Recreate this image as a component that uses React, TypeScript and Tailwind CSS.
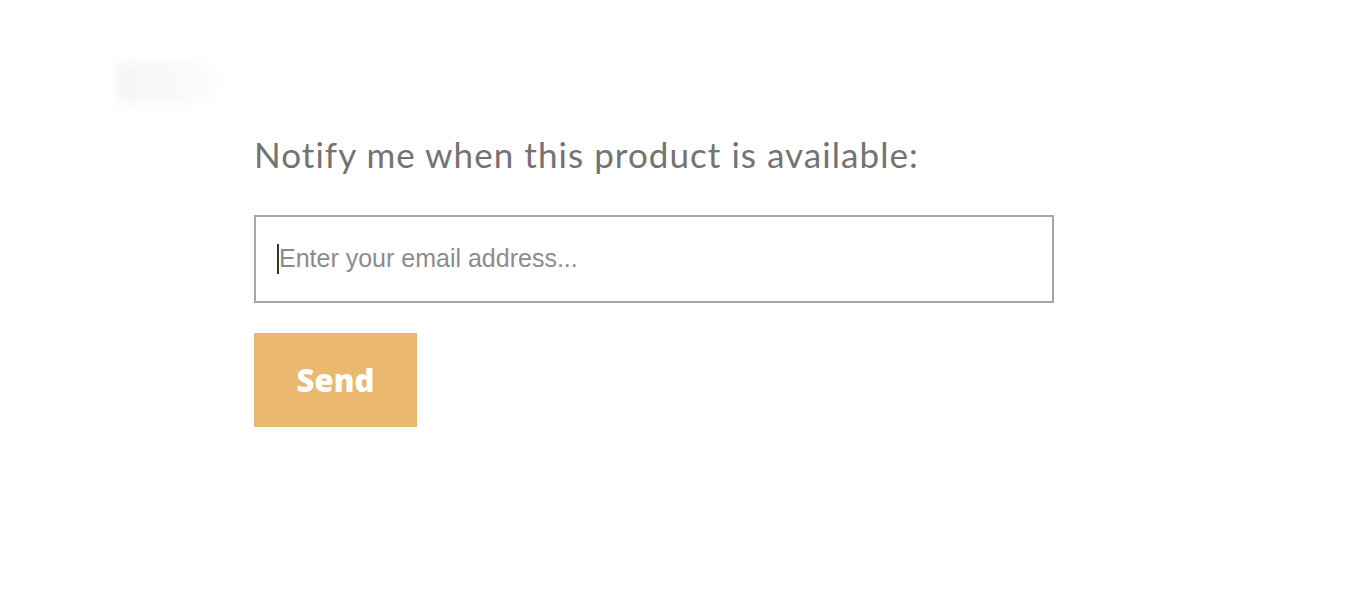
import React from "react";

export default function App() {
  return (
    <div className="w-[1348px] h-[594px] bg-white overflow-hidden relative">
      <div className="pt-[62px] pl-[117px]">
        <div className="w-[100px] h-[40px] bg-gradient-to-r from-[#f5f5f5] to-[#fcfcfc] blur-[5px] rounded-r-full" />
      </div>
      <div className="pl-[254px] pt-[28px]">
        <h1
          className="text-[35px] leading-[48px] text-[#737373] tracking-[1.05px]"
          style={{ fontFamily: "Lato, 'Noto Sans', sans-serif" }}
        >
          Notify me when this product is available:
        </h1>
        <div className="mt-[37px] w-[800px] h-[88px] border-2 border-[#a6a6a6] flex items-center pl-[21px]">
          <span className="w-[2px] h-[30px] bg-[#333]" />
          <span
            className="text-[25px] text-[#8c8c8c]"
            style={{ fontFamily: "'Liberation Sans', Arial, sans-serif" }}
          >
            Enter your email address...
          </span>
        </div>
        <button
          className="mt-[30px] w-[163px] h-[94px] bg-[#ebb86f] text-white text-[31px] font-extrabold flex items-center justify-center"
          style={{ fontFamily: "'Open Sans', 'Noto Sans', sans-serif" }}
        >
          Send
        </button>
      </div>
    </div>
  );
}
